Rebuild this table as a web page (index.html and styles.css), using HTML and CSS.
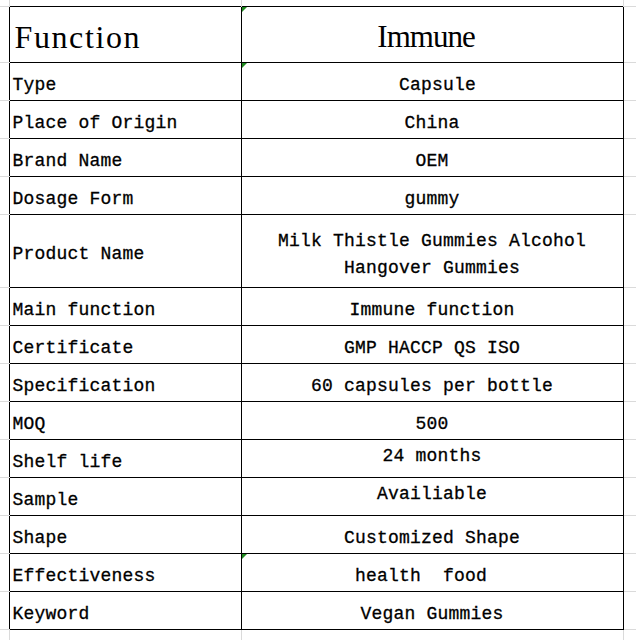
FILE: index.html
```html
<!DOCTYPE html>
<html>
<head>
<meta charset="utf-8">
<link rel="stylesheet" href="styles.css">
</head>
<body>
<table class="sheet">
  <colgroup>
    <col class="c-edge-l"><col class="c-label"><col class="c-value"><col class="c-edge-r">
  </colgroup>
  <tr class="gap-top"><td class="ge"></td><td class="gv"></td><td class="gv"></td><td class="ge"></td></tr>
  <tr class="r-head"><td class="e"></td><td class="k hk">Function</td><td class="v hv mark">Immune</td><td class="e"></td></tr>
  <tr class="r"><td class="e"></td><td class="k">Type</td><td class="v mark"> Capsule</td><td class="e"></td></tr>
  <tr class="r"><td class="e"></td><td class="k">Place of Origin</td><td class="v">China</td><td class="e"></td></tr>
  <tr class="r"><td class="e"></td><td class="k">Brand Name</td><td class="v">OEM</td><td class="e"></td></tr>
  <tr class="r"><td class="e"></td><td class="k">Dosage Form</td><td class="v">gummy</td><td class="e"></td></tr>
  <tr class="r-tall"><td class="e"></td><td class="k pk">Product Name</td><td class="v pv">Milk Thistle Gummies Alcohol<br>Hangover Gummies</td><td class="e"></td></tr>
  <tr class="r"><td class="e"></td><td class="k">Main function</td><td class="v">Immune function</td><td class="e"></td></tr>
  <tr class="r"><td class="e"></td><td class="k">Certificate</td><td class="v">GMP HACCP QS ISO</td><td class="e"></td></tr>
  <tr class="r"><td class="e"></td><td class="k">Specification</td><td class="v">60 capsules per bottle</td><td class="e"></td></tr>
  <tr class="r"><td class="e"></td><td class="k">MOQ</td><td class="v">500</td><td class="e"></td></tr>
  <tr class="r"><td class="e"></td><td class="k">Shelf life</td><td class="v up">24 months</td><td class="e"></td></tr>
  <tr class="r"><td class="e"></td><td class="k">Sample</td><td class="v up">Availiable</td><td class="e"></td></tr>
  <tr class="r"><td class="e"></td><td class="k">Shape</td><td class="v">Customized Shape</td><td class="e"></td></tr>
  <tr class="r"><td class="e"></td><td class="k">Effectiveness</td><td class="v mark">health  food  </td><td class="e"></td></tr>
  <tr class="r"><td class="e"></td><td class="k">Keyword</td><td class="v">Vegan Gummies</td><td class="e"></td></tr>
  <tr class="gap-bot"><td class="ge"></td><td class="gv"></td><td class="gv"></td><td class="ge"></td></tr>
</table>
</body>
</html>
```
FILE: styles.css
```css
html, body {
  margin: 0;
  padding: 0;
  background: #ffffff;
}

.sheet {
  border-collapse: collapse;
  table-layout: fixed;
  width: 636px;
  font-family: "Liberation Mono", "Noto Sans CJK SC", monospace;
  font-size: 18px;
  letter-spacing: 0.2px;
  color: #000;
  -webkit-text-stroke: 0.3px #000;
}

.c-edge-l { width: 9px; }
.c-label { width: 232px; }
.c-value { width: 382px; }
.c-edge-r { width: 13px; }

td {
  padding: 0;
  white-space: pre;
  position: relative;
}

.gap-top { height: 6px; }
.gap-bot { height: 11px; }
.r-head { height: 56px; }
.r { height: 38px; }
.r-tall { height: 73px; }

.ge { border: none; }
.gv {
  border-left: 1px solid #dadada;
  border-right: 1px solid #dadada;
}

.e {
  border-top: 1px solid #dadada;
  border-bottom: 1px solid #dadada;
}

.k, .v {
  border: 1px solid #000;
  vertical-align: bottom;
  line-height: 20px;
  padding-bottom: 5px;
}

.k {
  text-align: left;
  padding-left: 3px;
}

.v {
  text-align: center;
}

.hk, .hv {
  font-family: "Liberation Serif", serif;
  font-size: 32px;
  line-height: 36px;
  padding-bottom: 7px;
  -webkit-text-stroke: 0;
}

.hk {
  padding-left: 5px;
  letter-spacing: 1.6px;
}

.hv {
  font-size: 31px;
  letter-spacing: -1px;
  padding-right: 12px;
}

.pk {
  padding-bottom: 23px;
}

.pv {
  line-height: 27px;
  padding-bottom: 5px;
}

.up {
  padding-bottom: 11px;
}

.mark::before {
  content: "";
  position: absolute;
  left: 0;
  top: 0;
  border-top: 5px solid #1f8a1f;
  border-right: 5px solid transparent;
}
```
